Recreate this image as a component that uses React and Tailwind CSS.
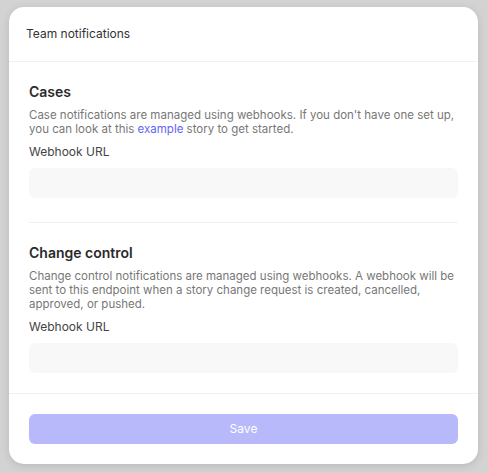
import React from 'react';

const font = { fontFamily: 'Inter, "Noto Sans", sans-serif' };

const WebhookField = () => (
  <div>
    <label className="block mt-[7px] text-[12px] leading-[18px] text-[#444]">Webhook URL</label>
    <input
      type="text"
      className="mt-[7px] block w-full h-[30px] rounded-[6px] bg-[#f8f8f8] outline-none px-3 text-[13px]"
    />
  </div>
);

export default function App() {
  return (
    <div className="w-full h-[473px] bg-[#d3d3d3] pt-[7px] pl-[9px] pr-[10px]" style={font}>
      <div className="bg-white rounded-[15px] shadow-[0_2px_8px_rgba(0,0,0,0.12)] overflow-hidden">
        {/* Header */}
        <div className="h-[55px] flex items-center px-[17px] border-b border-[#f1f1f1] text-[12px] text-[#333]">
          Team notifications
        </div>

        <div className="px-5">
          {/* Cases */}
          <section className="pt-5 pb-6 border-b border-[#f1f1f1]">
            <h2 className="text-[14px] leading-5 font-semibold text-[#2a2a2a]">Cases</h2>
            <p className="mt-[6px] text-[11.5px] leading-[14px] text-[#777]">
              Case notifications are managed using webhooks. If you don't have one set up, you can look at this{' '}
              <a href="#" className="text-[#6366f1]">example</a> story to get started.
            </p>
            <WebhookField />
          </section>

          {/* Change control */}
          <section className="pt-5 pb-5">
            <h2 className="text-[14px] leading-5 font-semibold text-[#2a2a2a]">Change control</h2>
            <p className="mt-[6px] text-[11.5px] leading-[14px] text-[#777]">
              Change control notifications are managed using webhooks. A webhook will be sent to this endpoint when a story change request is created, cancelled, approved, or pushed.
            </p>
            <WebhookField />
          </section>
        </div>

        {/* Footer */}
        <div className="border-t border-[#f1f1f1] px-5 py-5">
          <button className="w-full h-[30px] rounded-[6px] bg-[#b8b9fb] text-white text-[12px]">Save</button>
        </div>
      </div>
    </div>
  );
}
